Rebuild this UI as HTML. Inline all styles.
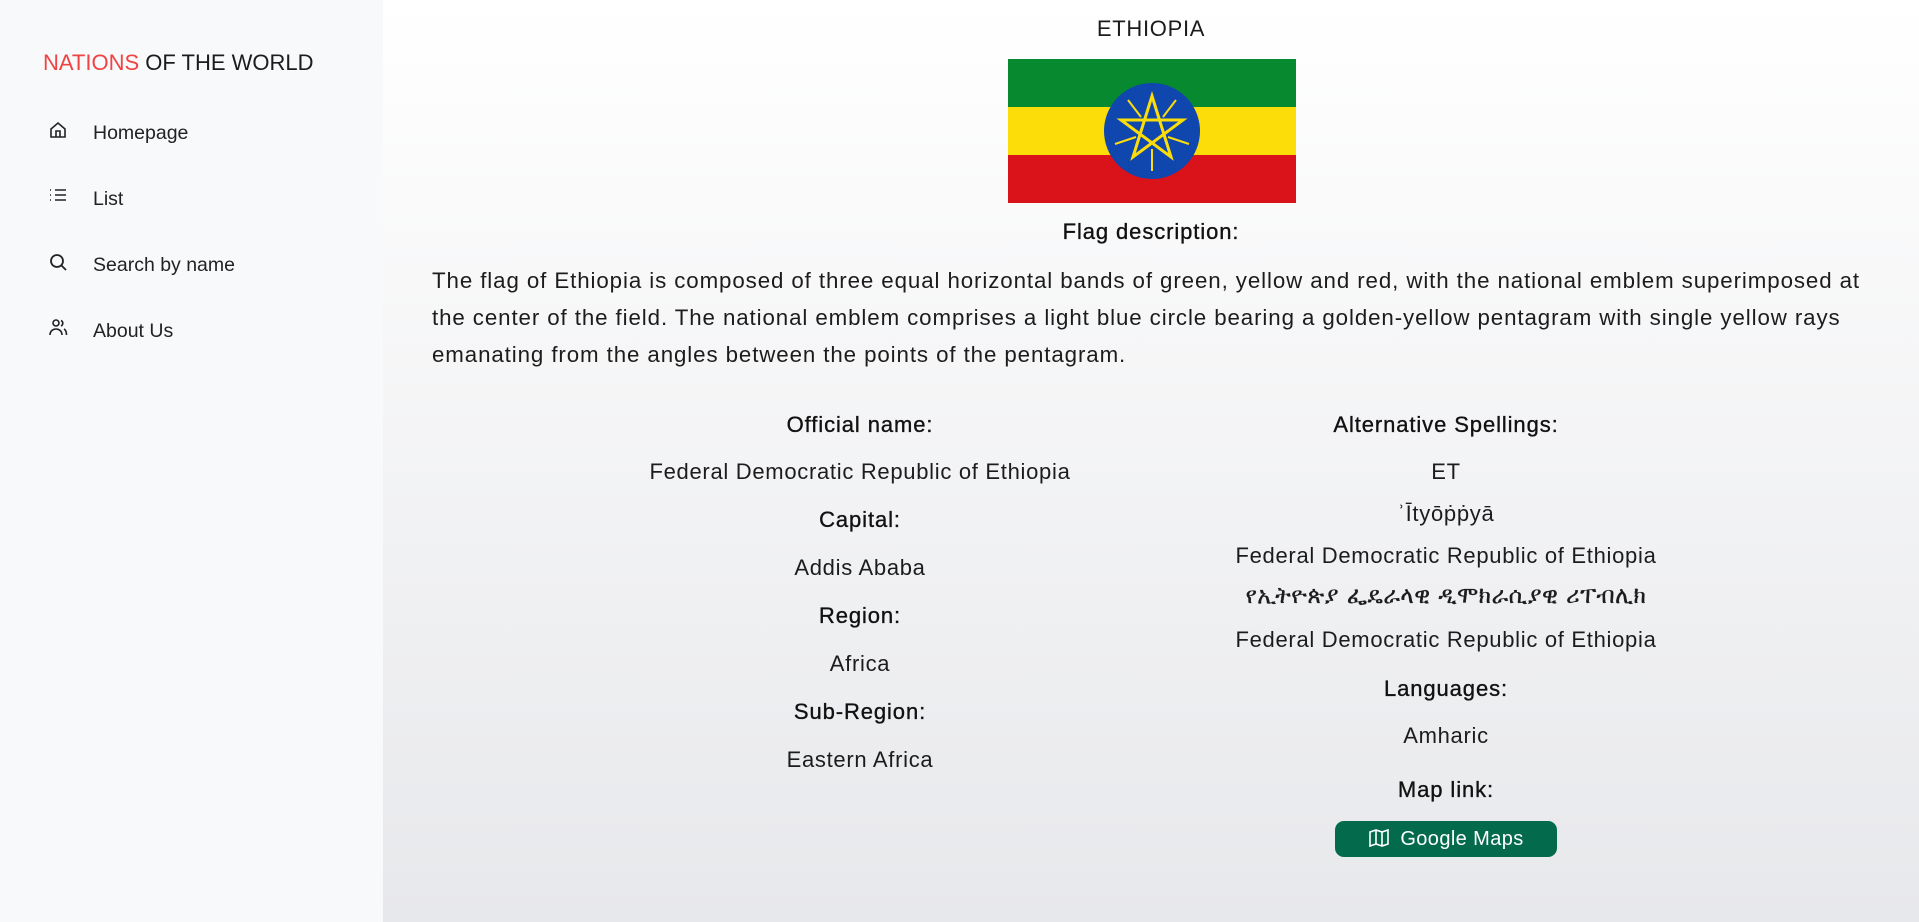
<!DOCTYPE html>
<html><head><meta charset="utf-8"><style>
*{margin:0;padding:0;box-sizing:border-box}
body{width:1919px;height:922px;overflow:hidden;font-family:"Liberation Sans","DejaVu Sans",sans-serif;color:#1c1c1c;background:linear-gradient(#fff,#e7e8eb);position:relative}
.side{position:absolute;left:0;top:0;width:383px;height:922px;background:#f8f9fb}
.logo{position:absolute;left:43px;top:50px;font-size:22px;letter-spacing:0}
.logo span{color:#ef4444}
.nav{position:absolute;left:93px;font-size:19.5px;color:#222}
.ic{position:absolute;left:48px;width:20px;height:20px}
.c{position:absolute;text-align:center;font-size:22px;white-space:nowrap;letter-spacing:0.7px}
.h{-webkit-text-stroke:0.35px #111;color:#111;letter-spacing:0.9px}
.l{left:560px;width:600px}
.r{left:1146px;width:600px}
p.d{position:absolute;left:432px;top:262px;width:1450px;font-size:22.3px;line-height:37px;letter-spacing:0.9px}
.btn{position:absolute;left:1335px;top:821px;width:222px;height:36px;background:#036b4c;border-radius:9px;color:#fff;font-size:20px;line-height:36px;text-align:center;letter-spacing:0.4px}
</style></head><body>
<div class="side">
<div class="logo"><span>NATIONS</span> OF THE WORLD</div>
<svg class="ic" style="top:120px" viewBox="0 0 20 20" fill="none" stroke="#222" stroke-width="1.6"><path d="M3 9L10 3l7 6v8H3z"/><path d="M8 17v-6h4v6"/></svg>
<div class="nav" style="top:122px">Homepage</div>
<svg class="ic" style="top:186px" viewBox="0 0 20 20" fill="none" stroke="#222" stroke-width="1.6"><path d="M7 4h11M7 9h11M7 14h11M2 4h1M2 9h1M2 14h1"/></svg>
<div class="nav" style="top:188px">List</div>
<svg class="ic" style="top:252px" viewBox="0 0 20 20" fill="none" stroke="#222" stroke-width="1.8"><circle cx="9" cy="9" r="6"/><path d="M13.5 13.5L18 18"/></svg>
<div class="nav" style="top:254px">Search by name</div>
<svg class="ic" style="top:318px" viewBox="0 0 20 20" fill="none" stroke="#222" stroke-width="1.6"><circle cx="8" cy="5" r="3"/><path d="M2 17c0-4 3-6 6-6s6 2 6 6M13 2.5a3 3 0 010 5.5M16 11c2 1 2.5 3 2.5 6"/></svg>
<div class="nav" style="top:320px">About Us</div>
</div>
<div class="c" style="left:851px;width:600px;top:16px;font-size:22px">ETHIOPIA</div>
<svg style="position:absolute;left:1008px;top:59px" width="288" height="144" viewBox="0 0 288 144">
<rect width="288" height="48" fill="#078930"/><rect y="48" width="288" height="48" fill="#fcdd09"/><rect y="96" width="288" height="48" fill="#da121a"/>
<circle cx="144" cy="72" r="48" fill="#0f47af"/>
<g stroke="#fcdd09" stroke-width="3" fill="none">
<path d="M144 37L163 98L113 61H175L125 98Z"/>
<path d="M144 90V112M160 78L181 85M155 58L168 41M133 58L120 41M128 78L107 85" stroke-width="2"/>
</g></svg>
<div class="c h" style="left:851px;width:600px;top:219px">Flag description:</div>
<p class="d">The flag of Ethiopia is composed of three equal horizontal bands of green, yellow and red, with the national emblem superimposed at the center of the field. The national emblem comprises a light blue circle bearing a golden-yellow pentagram with single yellow rays emanating from the angles between the points of the pentagram.</p>
<div class="c h l" style="top:412px">Official name:</div>
<div class="c l" style="top:459px">Federal Democratic Republic of Ethiopia</div>
<div class="c h l" style="top:507px">Capital:</div>
<div class="c l" style="top:555px">Addis Ababa</div>
<div class="c h l" style="top:603px">Region:</div>
<div class="c l" style="top:651px">Africa</div>
<div class="c h l" style="top:699px">Sub-Region:</div>
<div class="c l" style="top:747px">Eastern Africa</div>
<div class="c h r" style="top:412px">Alternative Spellings:</div>
<div class="c r" style="top:459px">ET</div>
<div class="c r" style="top:501px">ʾĪtyōṗṗyā</div>
<div class="c r" style="top:543px">Federal Democratic Republic of Ethiopia</div>
<div class="c r" style="top:583px;font-size:23px;letter-spacing:0.5px;-webkit-text-stroke:0.3px #1c1c1c;font-family:'DejaVu Sans','Noto Sans CJK SC',sans-serif">የኢትዮጵያ ፌዴራላዊ ዲሞክራሲያዊ ሪፐብሊክ</div>
<div class="c r" style="top:627px">Federal Democratic Republic of Ethiopia</div>
<div class="c h r" style="top:676px">Languages:</div>
<div class="c r" style="top:723px">Amharic</div>
<div class="c h r" style="top:777px">Map link:</div>
<div class="btn"><svg width="22" height="22" viewBox="0 0 22 22" fill="none" stroke="#fff" stroke-width="1.6" style="vertical-align:-4px;margin-right:10px"><path d="M2 5l6-2 6 2 6-2v14l-6 2-6-2-6 2zM8 3v14M14 5v14"/></svg>Google Maps</div>
</body></html>
